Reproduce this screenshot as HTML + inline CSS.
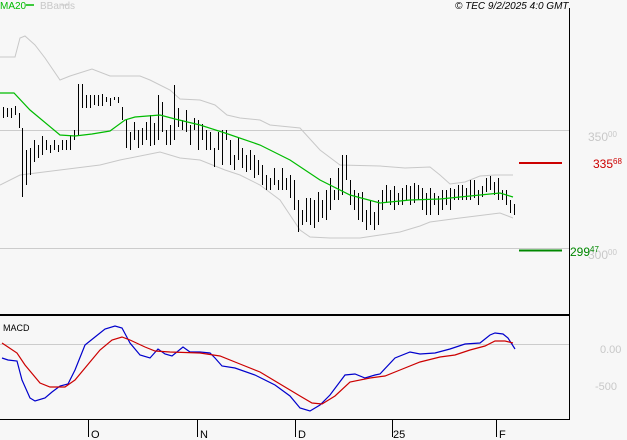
<!DOCTYPE html>
<html><head><meta charset="utf-8"><style>
html,body{margin:0;padding:0;background:#f7f7f7;}
svg{display:block;font-family:"Liberation Sans",sans-serif;}
</style></head><body>
<svg width="627" height="440" viewBox="0 0 627 440" xmlns="http://www.w3.org/2000/svg">
<rect width="627" height="440" fill="#f7f7f7"/>
<text x="0" y="9" font-size="10" fill="#00bb00">MA20</text>
<line x1="26" y1="5" x2="34" y2="5" stroke="#00bb00" stroke-width="1.5"/>
<text x="40" y="9" font-size="10" fill="#c8c8c8">BBands</text>
<line x1="61" y1="5" x2="68" y2="5" stroke="#c8c8c8"/>
<text x="455" y="9" font-size="10" font-style="italic" fill="#000">© TEC 9/2/2025 4:0 GMT</text>
<line x1="0" y1="130.5" x2="569" y2="130.5" stroke="#cccccc"/>
<line x1="0" y1="248.5" x2="569" y2="248.5" stroke="#cccccc"/>
<line x1="0" y1="344.5" x2="569" y2="344.5" stroke="#cccccc"/>
<text x="588" y="141" font-size="12" fill="#c8c8c8">350<tspan font-size="8" dy="-4">00</tspan></text>
<text x="588" y="259" font-size="12" fill="#c8c8c8">300<tspan font-size="8" dy="-4">00</tspan></text>
<text x="600" y="353" font-size="11" fill="#c8c8c8">0.00</text>
<text x="595" y="390" font-size="11" fill="#c8c8c8">-500</text>
<line x1="569.5" y1="8" x2="569.5" y2="420" stroke="#000"/>
<line x1="0" y1="315" x2="570" y2="315" stroke="#000" stroke-width="2"/>
<line x1="0" y1="419.5" x2="570" y2="419.5" stroke="#000"/>
<text x="3" y="331" font-size="9" fill="#000">MACD</text>
<g stroke="#000"><line x1="88.5" y1="419" x2="88.5" y2="437"/><line x1="197.5" y1="419" x2="197.5" y2="437"/><line x1="295.5" y1="419" x2="295.5" y2="437"/><line x1="392.5" y1="419" x2="392.5" y2="437"/><line x1="496.5" y1="419" x2="496.5" y2="437"/></g>
<g font-size="11" fill="#000"><text x="91" y="438">O</text><text x="200" y="438">N</text><text x="298" y="438">D</text><text x="393" y="438">25</text><text x="499" y="438">F</text></g>
<polyline fill="none" stroke="#c8c8c8" points="0,57 15,57 20,38 25,36 35,45 45,58 60,80 70,76 92,69 110,76 140,76 150,80 170,90 180,99 200,100 215,105 227,115 240,118 260,120 270,125 300,128 320,150 340,165 380,166 405,168 430,167 440,175 450,184 465,182 480,176 495,175 513,175"/>
<polyline fill="none" stroke="#c8c8c8" points="0,185 20,175 60,170 100,165 120,160 160,152 180,158 200,160 225,170 240,175 260,185 280,200 290,215 300,230 310,237 330,238 360,238 380,235 400,232 420,226 430,222 460,218 500,213 513,218"/>
<path fill="none" stroke="#000" stroke-width="1" transform="translate(0.5,0)" d="M3,107V118M7,108V117M11,108V118M15,106V115M19,113V128M22,128V197M26,150V185M30,148V175M34,140V162M38,145V158M42,136V155M46,140V150M50,145V153M54,140V150M58,145V152M62,140V150M66,140V150M70,135V150M74,130V140M78,84V135M82,84V108M86,95V108M90,95V108M94,95V105M98,95V106M102,94V106M106,97V102M110,98V106M114,97V100M118,97V103M122,107V120M126,120V148M130,132V150M134,122V140M138,130V148M142,128V145M146,122V140M150,115V146M154,123V145M158,95V140M162,102V132M166,130V145M170,125V145M174,85V140M178,108V127M182,120V130M186,110V132M190,125V145M194,118V130M198,120V150M202,124V140M206,130V150M210,132V150M214,148V167M218,132V150M222,130V165M226,130V140M230,140V165M234,155V170M238,138V160M242,148V168M246,155V172M250,150V170M254,155V178M258,160V175M262,165V185M266,175V190M270,178V190M274,168V185M278,180V190M282,168V190M286,178V190M290,175V198M294,180V210M298,200V232M302,210V225M306,198V222M310,198V225M314,200V228M318,192V222M322,200V218M326,190V220M330,178V210M334,190V200M338,168V200M342,155V195M346,155V180M350,180V205M354,190V210M358,193V220M362,192V222M366,210V230M370,200V225M374,212V230M378,200V225M382,190V210M386,185V203M390,190V205M394,186V210M398,193V205M402,188V205M406,185V200M410,186V205M414,183V203M418,185V200M422,188V210M426,193V215M430,188V215M434,193V205M438,196V215M442,190V210M446,190V205M450,188V210M454,189V200M458,185V200M462,185V200M466,188V200M470,180V200M474,180V198M478,190V205M482,186V197M486,178V192M490,176V190M494,182V195M498,178V200M502,190V200M506,190V205M510,200V213M514,204V215"/>
<polyline fill="none" stroke="#00bb00" stroke-width="1.2" points="0,93 14,93 30,110 60,135 75,136 92,134 110,131 125,120 135,117 160,115 175,119 200,125 225,133 260,145 290,160 320,180 350,195 380,203 410,200 440,199 470,196 500,193 513,197"/>
<line x1="519" y1="163" x2="562" y2="163" stroke="#cc0000" stroke-width="2"/>
<text x="593" y="168" font-size="12" fill="#cc0000">335<tspan font-size="8" dy="-4">68</tspan></text>
<line x1="519" y1="250.5" x2="562" y2="250.5" stroke="#008800" stroke-width="2"/>
<text x="570" y="256" font-size="12" fill="#008800">299<tspan font-size="8" dy="-4">47</tspan></text>
<polyline fill="none" stroke="#0000cc" stroke-width="1.2" points="2,358 8,360 17,361 22,380 30,398 35,401 45,398 52,392 60,386 68,384 75,370 85,345 95,337 105,329 115,326 122,328 130,343 140,355 150,358 158,349 165,354 172,356 183,347 190,352 200,352 210,353 215,358 222,366 235,368 255,375 275,385 290,396 300,408 310,411 320,405 330,395 345,375 355,374 365,378 375,375 380,374 395,358 410,352 420,354 435,353 450,349 465,344 480,343 490,335 495,333 503,334 508,338 515,349"/>
<polyline fill="none" stroke="#cc0000" stroke-width="1.2" points="2,343 17,353 25,365 40,383 50,387 65,387 75,380 90,362 100,350 112,340 122,337 130,340 145,347 155,351 170,352 200,353 220,356 240,364 260,372 280,384 300,396 312,403 322,404 335,396 350,382 370,378 385,376 400,370 420,362 440,357 455,355 470,350 485,346 495,341 505,341 513,343"/>
</svg>
</body></html>
